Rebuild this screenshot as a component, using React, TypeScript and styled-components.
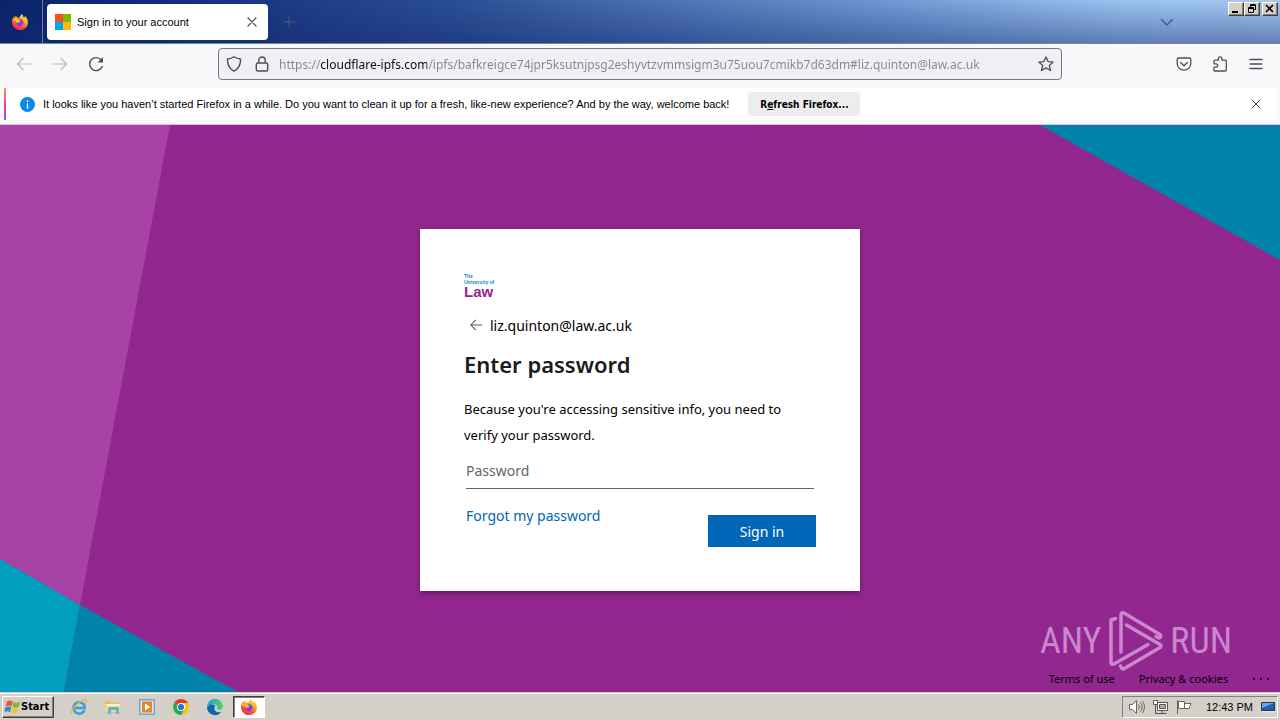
import React from 'react';
import styled, { createGlobalStyle, css } from 'styled-components';

const ui = '"Liberation Sans", Tahoma, sans-serif';
const web = '"Noto Sans", "Segoe UI", sans-serif';

const Global = createGlobalStyle`
  * { box-sizing: border-box; }
  body { margin: 0; font-family: ${ui}; font-size: 11px; color: #000; }
  button, input { font-family: inherit; }
  svg { display: block; flex: none; }
`;

const Screen = styled.div`
  display: flex;
  flex-direction: column;
  min-height: 100vh;
`;

/* Title bar */
const TitleBar = styled.header`
  display: flex;
  height: 44px;
  flex: none;
  border-bottom: 1px solid #77839c;
  background:
    linear-gradient(to bottom, rgba(255, 255, 255, 0), rgba(20, 40, 110, 0.45)),
    linear-gradient(to right, #0a246a 0%, #0f2d76 12%, #2a4d94 35%, #6d97d2 68%, #9cc4f0 88%, #a4caf2 100%);
`;

const FirefoxView = styled.button`
  display: grid;
  place-items: center;
  width: 43px;
  padding: 0 2px 0 0;
  border: 0;
  border-right: 1px solid #6b7cab;
  background: none;
`;

const Tab = styled.div`
  display: flex;
  align-items: center;
  gap: 6px;
  width: 221px;
  height: 36px;
  margin: 4px 0 0 4px;
  padding: 0 8px;
  border-radius: 4px;
  background: #fff;
`;

const TabTitle = styled.span`
  flex: 1;
`;

const IconButton = styled.button<{ $w?: number }>`
  display: grid;
  place-items: center;
  width: ${(p) => p.$w ?? 16}px;
  height: 32px;
  flex: none;
  padding: 0;
  border: 0;
  background: none;
  color: #4e4e56;
  &:disabled { color: #b9b9bf; }
`;

const TitleSpacer = styled.div`
  flex: 1;
`;

const TabTools = styled.div`
  padding: 6px 0 0 6px;
  & > button { color: #56617a; }
`;

const AllTabs = styled.div`
  padding: 6px 53px 0 0;
  & > button { color: #3f5c8a; }
`;

const WindowButtons = styled.div`
  display: flex;
  padding: 2px 2px 0 0;
  align-items: flex-start;
`;

const WindowButton = styled.button<{ $gap?: boolean }>`
  display: grid;
  place-items: center;
  width: 16px;
  height: 14px;
  margin-left: ${(p) => (p.$gap ? 2 : 0)}px;
  padding: 0;
  border: 1px solid;
  border-color: #fff #404040 #404040 #fff;
  background: #d4d0c8;
  box-shadow: inset -1px -1px #808080;
`;

/* Navigation bar */
const NavBar = styled.nav`
  display: flex;
  align-items: center;
  height: 44px;
  flex: none;
  padding: 0 12px 4px 12px;
  background: #f8f8fb;
`;

const NavGroup = styled.div<{ $gap: number }>`
  display: flex;
  gap: ${(p) => p.$gap}px;
`;

const AddressBar = styled.div`
  display: flex;
  align-items: center;
  flex: 1;
  height: 32px;
  margin: 0 110px;
  padding: 0 7px;
  gap: 12px;
  border: 1px solid #77777f;
  border-radius: 4px;
  background: #f0f0f4;
`;

const Url = styled.input`
  flex: 1;
  min-width: 0;
  height: 24px;
  margin-left: -3px;
  padding: 0;
  border: 0;
  outline: 0;
  font-family: ${web};
  font-size: 12px;
  background: linear-gradient(to right, #85858c 0 41px, #0c0c10 41px 148px, #85858c 148px);
  background-clip: text;
  -webkit-background-clip: text;
  -webkit-text-fill-color: transparent;
`;

/* Notification strip */
const NoticeArea = styled.div`
  flex: none;
  height: 37px;
  background: #f9f9fb;
  border-bottom: 1px solid #ecb4ee;
`;

const Notice = styled.aside`
  display: flex;
  align-items: center;
  height: 32px;
  margin: 0 4px;
  padding: 0 12px 0 14px;
  border-left: 2px solid;
  border-image: linear-gradient(#ff9a50, #f0409a, #8a50e8) 1;
  background: #fff;
`;

const NoticeText = styled.p`
  margin: 0 19px 0 8px;
`;

const RefreshButton = styled.button`
  height: 24px;
  width: 112px;
  margin-right: auto;
  padding: 0;
  border: 0;
  border-radius: 4px;
  background: #ededf0;
  font: 700 10px "DejaVu Sans Condensed", sans-serif;
`;

/* Page */
const Page = styled.main`
  position: relative;
  flex: 1;
  display: grid;
  place-items: center;
  padding: 40px 16px 37px;
  background: #92278f;
`;

const Backdrop = styled.svg`
  position: absolute;
  inset: 0;
  width: 100%;
  height: 100%;
`;

const Card = styled.form`
  position: relative;
  width: 100%;
  max-width: 440px;
  padding: 44px;
  background: #fff;
  box-shadow: 0 2px 6px rgba(0, 0, 0, 0.35);
  font-family: ${web};
`;

const Logo = styled.div`
  height: 25px;
  color: #1787c8;
  font: 700 5px/6px "Liberation Sans", sans-serif;
`;

const LogoName = styled.div`
  color: #92278f;
  font: 700 15px/14px "Liberation Sans", sans-serif;
`;

const Identity = styled.div`
  display: flex;
  align-items: center;
  gap: 7px;
  height: 24px;
  margin-top: 15px;
  padding-left: 5px;
  font-size: 14px;
`;

const BackButton = styled.button`
  padding: 0;
  border: 0;
  background: none;
  color: #555;
`;

const Heading = styled.h1`
  margin: 13px 0 18px;
  color: #1b1b1b;
  font-size: 22px;
  font-weight: 600;
  line-height: 28px;
`;

const Reason = styled.p`
  margin: 0;
  font-size: 13px;
  line-height: 26px;
`;

const Password = styled.input`
  display: block;
  width: calc(100% - 4px);
  height: 36px;
  margin: 5px 2px 0;
  padding: 0;
  border: 0;
  border-bottom: 1px solid #666;
  outline: 0;
  font-size: 14px;
  &::placeholder { color: #666; opacity: 1; }
`;

const Actions = styled.div`
  display: flex;
  justify-content: space-between;
  height: 58px;
  padding: 16px 0 0 2px;
`;

const Forgot = styled.a`
  color: #0067b8;
  font-size: 14px;
  line-height: 22px;
  text-decoration: none;
`;

const SignIn = styled.button`
  align-self: flex-end;
  width: 108px;
  height: 32px;
  padding: 0;
  border: 0;
  background: #0067b8;
  color: #fff;
  font-size: 14px;
`;

const Watermark = styled.div`
  position: absolute;
  right: 48px;
  bottom: 20px;
  display: flex;
  align-items: center;
  gap: 7px;
  color: #cb86cc;
  font: 400 36px/62px "Roboto Condensed", Roboto, sans-serif;
`;

const PageFooter = styled.footer`
  position: absolute;
  right: 0;
  bottom: 0;
  display: flex;
  gap: 24px;
  height: 26px;
  padding-right: 10px;
  font-family: ${web};
  font-size: 11px;
  line-height: 26px;
`;

const FooterLink = styled.a`
  color: #000;
  text-decoration: none;
`;

const MoreButton = styled.button`
  padding: 0;
  border: 0;
  background: none;
`;

/* Taskbar */
const Taskbar = styled.footer`
  display: flex;
  align-items: center;
  height: 28px;
  flex: none;
  padding: 0 2px;
  border-top: 1px solid #d4d0c8;
  box-shadow: inset 0 1px #fff;
  background: #d4d0c8;
`;

const StartButton = styled.button`
  display: flex;
  align-items: center;
  width: 52px;
  height: 22px;
  padding: 0 0 0 1px;
  border: 1px solid;
  border-color: #fff #404040 #404040 #fff;
  background: #d4d0c8;
  box-shadow: inset -1px -1px #808080;
  font: 700 11px "DejaVu Sans Condensed", sans-serif;
`;

const Launchers = styled.div`
  display: flex;
  gap: 2px;
  margin: 0 auto 0 9px;
`;

const Launcher = styled.button<{ $active?: boolean }>`
  display: grid;
  place-items: center;
  width: 32px;
  height: 22px;
  padding: 0;
  border: 1px solid transparent;
  background: none;
  ${(p) => p.$active && css`
    border-color: #404040 #fff #fff #404040;
    background: #fff;
    box-shadow: inset 1px 1px #808080;
  `}
`;

const Tray = styled.div`
  display: flex;
  align-items: center;
  gap: 7px;
  height: 22px;
  padding: 0 1px 0 5px;
  border: 1px solid;
  border-color: #808080 #fff #fff #808080;
`;

const Clock = styled.time`
  margin: 0 0 0 6px;
`;

const FirefoxIcon = () => (
  <svg width="18" height="18" viewBox="0 0 18 18">
    <defs>
      <linearGradient id="fox" x1="0.8" y1="0" x2="0.25" y2="1">
        <stop offset="0" stopColor="#fff04a" /><stop offset="0.35" stopColor="#ffad24" />
        <stop offset="0.7" stopColor="#ff5038" /><stop offset="1" stopColor="#e8206c" />
      </linearGradient>
    </defs>
    <path fill="url(#fox)" d="M11 1c1 1.200 1.500 2.400 1.600 3.500 1-.2 1.300-1 1.300-1.600C16 4.700 17 7 17 9.400 17 13.800 13.400 17 9 17s-8-3.400-8-7.800c0-2.500 1-4.500 2.200-5.900l.3 1.200c.5-.8 1.200-1.400 2-1.800v1.600c1 0 2 .2 2.700.7C8.700 3.500 9.700 2.300 11 1z" />
    <path fill="#7a3ff0" d="M6 6.300c2-1.200 5.500-.5 6.300 2.200.7 2.700-1.200 4.600-3.500 4.600-2.200 0-3.800-1.700-3.600-3.500.7.8 1.700 1 2.700.5 1-.4 1-.9 1.700-1-.3-1-1.600-.9-2.300-1C6.800 8 6.200 7.300 6 6.300z" />
    <path fill="#ffbd2e" d="M1.300 7.500c.8-1.700 2.500-2.500 4.400-2 1.200.3 2 1.300 3.800 1.600.3.900-.5 1.300-1.800 1.500-.6.100-.7 1-.1 1.500-1.700.1-2.800-.8-2.900-2-.9-.5-2.300-.5-3.400-.6z" />
  </svg>
);

const MicrosoftIcon = () => (
  <svg width="16" height="16" viewBox="0 0 16 16">
    <path fill="#f25022" d="M0 0h8v8H0z" /><path fill="#7fba00" d="M8 0h8v8H8z" />
    <path fill="#00a4ef" d="M0 8h8v8H0z" /><path fill="#ffb900" d="M8 8h8v8H8z" />
  </svg>
);

const Line = ({ d, size = 16, w = 1.2 }: { d: string; size?: number; w?: number }) => (
  <svg width={size} height={size} viewBox="0 0 16 16" fill="none" stroke="currentColor" strokeWidth={w} strokeLinecap="round" strokeLinejoin="round">
    <path d={d} />
  </svg>
);

const paths = {
  close: 'M4 4l8 8M12 4l-8 8',
  plus: 'M8 2v12M2 8h12',
  down: 'M2.500 5.500L8 11l5.500-5.500',
  back: 'M15 8H1.500M7 2.500L1.500 8 7 13.500',
  forward: 'M1 8h13.500M9 2.500L14.500 8 9 13.500',
  shield: 'M8 .8c2 1.400 4.200 2 6.500 2.200.3 5.500-1.800 9.700-6.500 12.200C3.300 12.700 1.200 8.500 1.500 3 3.800 2.800 6 2.200 8 .8z',
  lock: 'M3.800 7h8.400a1.500 1.500 0 011.500 1.500v5a1.500 1.500 0 01-1.500 1.500H3.800a1.500 1.500 0 01-1.500-1.500v-5A1.500 1.500 0 013.800 7zM4.800 7V4.200a3.200 3.200 0 016.400 0V7',
  star: 'M8 .9l2.100 4.700 5.100.5-3.900 3.400 1.200 5L8 11.900l-4.500 2.600 1.200-5L.8 6.100l5.100-.5z',
  pocket: 'M2.700 2h10.600a1.500 1.500 0 011.500 1.500v3.800a6.800 6.800 0 01-13.600 0V3.500A1.500 1.500 0 012.700 2zM4.700 6.500L8 9.700l3.300-3.200',
  menu: 'M2 3.500h12M2 8h12M2 12.500h12',
  puzzle: 'M2.500 15h10.800a1 1 0 001-1V5.200a1 1 0 00-1-1H10V2.700a1.800 1.800 0 00-3.600 0v1.500H3a1 1 0 00-1 1v2.600h2a1.700 1.700 0 010 3.400H2V14.500z',
};

const ReloadIcon = () => (
  <svg width="16" height="16" viewBox="0 0 16 16" fill="none" stroke="currentColor" strokeWidth="1.4">
    <path d="M14.200 10.500A6.500 6.500 0 1113.200 4" strokeLinecap="round" />
    <path d="M15 1v5.500H9.500z" fill="currentColor" stroke="none" />
  </svg>
);

const PlayMark = () => (
  <svg width="55" height="62" viewBox="0 0 55 62" fill="none" stroke="currentColor" strokeWidth="3.500" strokeLinejoin="round" strokeLinecap="round">
    <path d="M7.500 8.500L3 10v42q0 3 3 2l34-19.500" />
    <path d="M13 42V5q0-3 3-2l36 21.500q2 2.500-1 3.500l-3-1.500" />
    <path d="M18.500 15L52 34.500q2 1.500 0 3L15.500 59q-2 0-3-3" />
  </svg>
);

const WindowsFlag = () => (
  <svg width="17" height="16" viewBox="0 0 17 16">
    <path fill="#e8572a" d="M3 2.500C5 1 7 1.300 8.700 2.500L7.500 7.300C5.700 6.200 4 6.200 1.700 7.400z" />
    <path fill="#7ab83a" d="M9.500 2.900c2 1 4 1 6.500 0l-1.400 5c-2.300 1.200-4.200 1-6.300-.3z" />
    <path fill="#3b82c9" d="M1.500 8.200c2-1 4-1 5.800 0L6 13c-2-1.200-3.800-1-5.800 0z" />
    <path fill="#f7c331" d="M8.100 8.600c2 1 4 1 6.300.2L13 13.500c-2 1-4.200.9-6.200-.3z" />
  </svg>
);

const IeIcon = () => (
  <svg width="18" height="18" viewBox="0 0 18 18" fill="none">
    <path d="M14.500 12.200A5.700 5.700 0 114 7.500 5.700 5.700 0 0114.800 10H4" stroke="#3aa0dc" strokeWidth="2.600" />
    <path d="M2.500 16c-2.500-1 0-6 5-10.300C12 2 16.500.8 16.600 3c0 .9-.5 2-1 2.700" stroke="#e3b53c" strokeWidth="1.200" />
  </svg>
);

const FolderIcon = () => (
  <svg width="18" height="18" viewBox="0 0 18 18">
    <path fill="#e4c163" d="M1 3h5l1 1.500h9V15H1z" /><path fill="#fff3bc" d="M2 6h14v8H2z" />
    <path fill="#f3d983" d="M1 8h15v6H1z" /><path fill="#62b3de" d="M4 11c0-1.500 1-2 2-2h7c1.500 0 2 .8 2 2v5h-3v-4H7v4H4z" />
  </svg>
);

const MediaIcon = () => (
  <svg width="18" height="18" viewBox="0 0 18 18">
    <path fill="#6fa8d4" d="M1 1h16v16H1z" /><path fill="#d6ebf8" d="M2.500 2.500h13v13h-13z" />
    <path fill="#ef8218" d="M4 3.500h10v11H4z" /><path fill="#fff" d="M7 5.500L12.500 9 7 12.500z" />
  </svg>
);

const ChromeIcon = () => (
  <svg width="16" height="16" viewBox="0 0 16 16">
    <path fill="#e33b2e" d="M8 8L1.100 4A8 8 0 0114.900 4z" /><path fill="#fbc116" d="M8 8V4h6.900A8 8 0 018 16z" />
    <path fill="#2da94f" d="M8 8l3.500 2L8 16A8 8 0 011.100 4z" />
    <circle cx="8" cy="8" r="4" fill="#fff" /><circle cx="8" cy="8" r="3.100" fill="#1a73e8" />
  </svg>
);

const EdgeIcon = () => (
  <svg width="18" height="18" viewBox="0 0 18 18">
    <defs>
      <linearGradient id="edge"><stop offset="0" stopColor="#1b9de2" /><stop offset="1" stopColor="#5fd35f" /></linearGradient>
    </defs>
    <path fill="#1266b4" d="M1 9a8 8 0 0014.500 4.700c-2.500 1.200-6.500.5-7-2.700-.2-1.500.3-2.500 1-3.200L5 5.500z" />
    <path fill="url(#edge)" d="M1 9a8 8 0 0116-.5c0 2.800-2.800 3.800-5.200 2.900-1-.4-.5-.9-.3-1.900.3-1.700-1.500-3.300-4-3.300C4.500 6.200 2 7 1 9z" />
  </svg>
);

export default function App() {
  return (
    <Screen>
      <Global />
      <TitleBar>
        <FirefoxView aria-label="Firefox View"><FirefoxIcon /></FirefoxView>
        <Tab>
          <MicrosoftIcon />
          <TabTitle>Sign in to your account</TabTitle>
          <IconButton aria-label="Close tab"><Line d={paths.close} /></IconButton>
        </Tab>
        <TabTools><IconButton $w={30} aria-label="New tab"><Line d={paths.plus} size={14} w={1} /></IconButton></TabTools>
        <TitleSpacer />
        <AllTabs><IconButton aria-label="List all tabs"><Line d={paths.down} w={1.5} /></IconButton></AllTabs>
        <WindowButtons>
          <WindowButton aria-label="Minimize">
            <svg width="12" height="10" viewBox="0 0 12 10"><path d="M2 7h6v2H2z" /></svg>
          </WindowButton>
          <WindowButton aria-label="Restore">
            <svg width="12" height="10" viewBox="0 0 12 10" fill="none" stroke="#000"><path d="M4.500 3V.5h5v5H8M4 1.500h6M2.500 3.500h5v5h-5zM2 4.500h6" /></svg>
          </WindowButton>
          <WindowButton $gap aria-label="Close">
            <svg width="12" height="10" viewBox="0 0 12 10" stroke="#000" strokeWidth="1.600"><path d="M2 1l7 7M9 1L2 8" /></svg>
          </WindowButton>
        </WindowButtons>
      </TitleBar>

      <NavBar>
        <NavGroup $gap={12}>
          <IconButton $w={24} disabled aria-label="Back"><Line d={paths.back} /></IconButton>
          <IconButton $w={24} disabled aria-label="Forward"><Line d={paths.forward} /></IconButton>
          <IconButton $w={24} aria-label="Reload"><ReloadIcon /></IconButton>
        </NavGroup>
        <AddressBar>
          <IconButton aria-label="Tracking protection"><Line d={paths.shield} w={1.4} /></IconButton>
          <IconButton aria-label="Site information"><Line d={paths.lock} w={1.4} /></IconButton>
          <Url aria-label="Address" defaultValue="https://cloudflare-ipfs.com/ipfs/bafkreigce74jpr5ksutnjpsg2eshyvtzvmmsigm3u75uou7cmikb7d63dm#liz.quinton@law.ac.uk" />
          <IconButton aria-label="Bookmark"><Line d={paths.star} w={1.3} /></IconButton>
        </AddressBar>
        <NavGroup $gap={12}>
          <IconButton $w={24} aria-label="Save to Pocket"><Line d={paths.pocket} w={1.3} /></IconButton>
          <IconButton $w={24} aria-label="Extensions"><Line d={paths.puzzle} w={1.3} /></IconButton>
          <IconButton $w={24} aria-label="Menu"><Line d={paths.menu} w={1.3} /></IconButton>
        </NavGroup>
      </NavBar>

      <NoticeArea>
        <Notice>
          <svg width="15" height="15" viewBox="0 0 15 15">
            <circle cx="7.500" cy="7.500" r="7.500" fill="#0a8ae6" />
            <path d="M7.500 3.300v1.600M7.500 6.300v5.500" stroke="#fff" strokeWidth="1.300" />
          </svg>
          <NoticeText>It looks like you haven’t started Firefox in a while. Do you want to clean it up for a fresh, like-new experience? And by the way, welcome back!</NoticeText>
          <RefreshButton>R<u>e</u>fresh Firefox...</RefreshButton>
          <IconButton aria-label="Dismiss"><Line d={paths.close} w={1} /></IconButton>
        </Notice>
      </NoticeArea>

      <Page>
        <Backdrop viewBox="0 0 1280 567" preserveAspectRatio="none" aria-hidden="true">
          <path fill="#a743a5" d="M0 0h170L80 480 0 434z" />
          <path fill="#009fc0" d="M0 434l80 46-16 87H0z" />
          <path fill="#0083ab" d="M80 480l158 87H64zM1040 0h240v135z" />
        </Backdrop>
        <Card onSubmit={(e) => e.preventDefault()}>
          <Logo>The<br />University of<LogoName>Law</LogoName></Logo>
          <Identity>
            <BackButton type="button" aria-label="Back"><Line d="M14.500 8H2M7.500 2.500L2 8l5.500 5.500" size={14} /></BackButton>
            liz.quinton@law.ac.uk
          </Identity>
          <Heading>Enter password</Heading>
          <Reason>Because you're accessing sensitive info, you need to verify your password.</Reason>
          <Password type="password" placeholder="Password" aria-label="Password" />
          <Actions>
            <Forgot href="#">Forgot my password</Forgot>
            <SignIn>Sign in</SignIn>
          </Actions>
        </Card>
        <Watermark><span>ANY</span><PlayMark /><span>RUN</span></Watermark>
        <PageFooter>
          <FooterLink href="#">Terms of use</FooterLink>
          <FooterLink href="#">Privacy &amp; cookies</FooterLink>
          <MoreButton aria-label="More options">
            <svg width="18" height="4" viewBox="0 0 18 4"><path d="M1 1h2v2H1zM8 1h2v2H8zM15 1h2v2h-2z" /></svg>
          </MoreButton>
        </PageFooter>
      </Page>

      <Taskbar>
        <StartButton><WindowsFlag />Start</StartButton>
        <Launchers>
          <Launcher aria-label="Internet Explorer"><IeIcon /></Launcher>
          <Launcher aria-label="Explorer"><FolderIcon /></Launcher>
          <Launcher aria-label="Media Player"><MediaIcon /></Launcher>
          <Launcher aria-label="Chrome"><ChromeIcon /></Launcher>
          <Launcher aria-label="Edge"><EdgeIcon /></Launcher>
          <Launcher $active aria-label="Firefox"><FirefoxIcon /></Launcher>
        </Launchers>
        <Tray>
          <svg width="17" height="16" viewBox="0 0 17 16" fill="#fff" stroke="#666">
            <path d="M1.500 5.500h3l4-4v13l-4-4h-3z" /><path fill="none" d="M10.500 5.500q2 2.500 0 5M12.500 3.500q3.500 4.500 0 9M14.500 2q4 6 0 12" />
          </svg>
          <svg width="17" height="16" viewBox="0 0 17 16" fill="#fff" stroke="#555">
            <path d="M5.500 3.500h10v8h-10z" /><path fill="#aaa" d="M7.500 5.500h6v4h-6z" /><path d="M1.500 1.500h4v4h-4zM3.500 6v8.500M3.500 14.500h11M10 12v2" />
          </svg>
          <svg width="17" height="16" viewBox="0 0 17 16" fill="#fff" stroke="#666">
            <path d="M1.500 1v14M2.500 2.500h6v7h-6zM8.500 4.500h6.500l-2 5h-4.500z" />
          </svg>
          <Clock>12:43 PM</Clock>
          <svg width="16" height="16" viewBox="0 0 16 16">
            <path fill="#1c5fb8" stroke="#334" d="M1.500 3.500h13v8h-13z" /><path fill="#65a8ea" d="M2 4h12L2 9z" /><path fill="#dce8f4" d="M2 12h12v1.500H2z" />
          </svg>
        </Tray>
      </Taskbar>
    </Screen>
  );
}
